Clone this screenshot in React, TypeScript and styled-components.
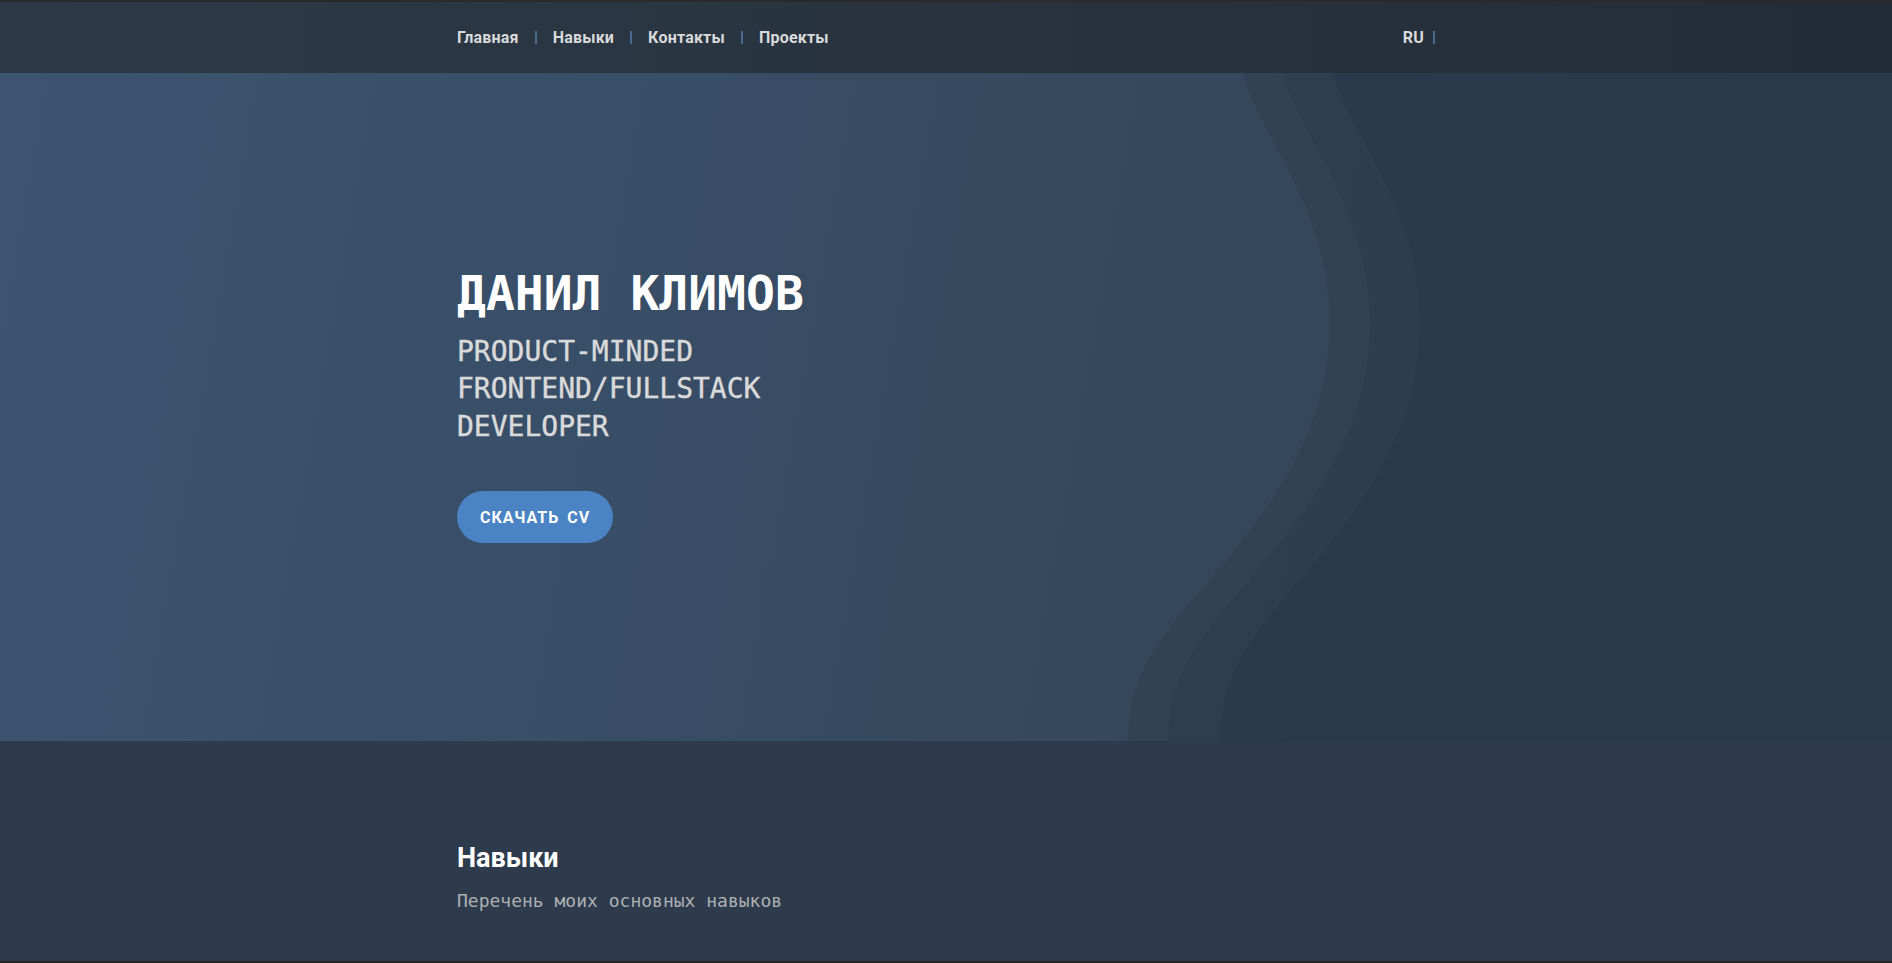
import styled, { createGlobalStyle } from 'styled-components';

const GlobalStyle = createGlobalStyle`
  html,
  body {
    margin: 0;
    padding: 0;
    background: #262626;
  }
  * {
    box-sizing: border-box;
  }
`;

const MONO = `'DejaVu Sans Mono', 'Liberation Mono', monospace`;
const SANS = `Roboto, 'Noto Sans', sans-serif`;

const Page = styled.div`
  min-height: 100vh;
  display: flex;
  flex-direction: column;
`;

const Container = styled.div`
  width: 978px;
  margin: 0 auto;
`;

const Header = styled.header`
  height: 73px;
  border-top: 2px solid #2a2a2a;
  background: linear-gradient(90deg, #2c3a47 0%, #28333f 50%, #232d38 100%);
`;

const HeaderRow = styled(Container)`
  height: 100%;
  display: flex;
  align-items: center;
  justify-content: space-between;
`;

const Nav = styled.nav`
  display: flex;
  align-items: center;
`;

const NavItem = styled.div`
  display: flex;
  align-items: center;
`;

const NavLink = styled.a`
  font-family: ${SANS};
  font-size: 16px;
  font-weight: 700;
  letter-spacing: 0.2px;
  color: #d9dadb;
  text-decoration: none;
  cursor: pointer;
`;

const Divider = styled.span`
  width: 2px;
  height: 13px;
  margin: 0 16px;
  background: #4a6a8f;
`;

const Lang = styled.div`
  display: flex;
  align-items: center;
`;

const LangDivider = styled(Divider)`
  margin: 0 0 0 9px;
`;

const Hero = styled.section`
  position: relative;
  height: 668px;
  overflow: hidden;
  background: linear-gradient(100deg, #3d5470 0%, #384d66 35%, #35475b 62%, #33455a 100%);
`;

const Waves = styled.svg`
  position: absolute;
  inset: 0;
  width: 100%;
  height: 100%;
`;

const HeroContent = styled(Container)`
  position: relative;
  padding-top: 192px;
  display: flex;
  flex-direction: column;
  align-items: flex-start;
`;

const Name = styled.h1`
  margin: 0;
  font-family: ${MONO};
  font-size: 48px;
  font-weight: 700;
  line-height: 57.6px;
  color: #ffffff;
`;

const Role = styled.p`
  margin: 10px 0 0;
  font-family: ${MONO};
  font-size: 28px;
  font-weight: 400;
  line-height: 37.5px;
  color: #dadada;
  -webkit-text-stroke: 0.4px #dadada;
`;

const DownloadButton = styled.button`
  margin-top: 46px;
  height: 52px;
  padding: 0 23px;
  border: none;
  border-radius: 26px;
  background: #4a84c4;
  font-family: ${SANS};
  font-size: 16px;
  font-weight: 700;
  letter-spacing: 1px;
  word-spacing: 3px;
  color: #ffffff;
  cursor: pointer;
`;

const Skills = styled.section`
  height: 220px;
  background: #2d3b4c;
`;

const SkillsContent = styled(Container)`
  padding-top: 101px;
`;

const SectionTitle = styled.h2`
  margin: 0;
  font-family: ${SANS};
  font-size: 27px;
  font-weight: 700;
  line-height: 33.6px;
  color: #ffffff;
`;

const SectionLead = styled.p`
  margin: 12px 0 0;
  font-family: ${MONO};
  font-size: 18px;
  line-height: 25px;
  color: #adafb1;
`;

const navItems = ['Главная', 'Навыки', 'Контакты', 'Проекты'];

function HeroWaves() {
  return (
    <Waves viewBox="0 0 1892 668" preserveAspectRatio="none" aria-hidden>
      <path
        d="M1243,0 C1256,55 1330,135 1330,250 C1330,360 1268,440 1200,518 C1150,575 1128,612 1128,668 L1892,668 L1892,0 Z"
        fill="rgba(18,26,36,0.1)"
      />
      <path
        d="M1283,0 C1296,55 1370,135 1370,250 C1370,360 1308,440 1240,518 C1190,575 1168,612 1168,668 L1892,668 L1892,0 Z"
        fill="rgba(18,26,36,0.1)"
      />
      <path
        d="M1333,0 C1346,55 1420,135 1420,250 C1420,360 1358,440 1290,518 C1242,575 1220,612 1220,668 L1892,668 L1892,0 Z"
        fill="rgba(18,26,36,0.1)"
      />
    </Waves>
  );
}

export default function App() {
  return (
    <Page>
      <GlobalStyle />
      <Header>
        <HeaderRow>
          <Nav>
            {navItems.map((item, i) => (
              <NavItem key={item}>
                {i > 0 && <Divider />}
                <NavLink>{item}</NavLink>
              </NavItem>
            ))}
          </Nav>
          <Lang>
            <NavLink>RU</NavLink>
            <LangDivider />
          </Lang>
        </HeaderRow>
      </Header>
      <Hero>
        <HeroWaves />
        <HeroContent>
          <Name>ДАНИЛ КЛИМОВ</Name>
          <Role>
            PRODUCT-MINDED
            <br />
            FRONTEND/FULLSTACK
            <br />
            DEVELOPER
          </Role>
          <DownloadButton>СКАЧАТЬ CV</DownloadButton>
        </HeroContent>
      </Hero>
      <Skills>
        <SkillsContent>
          <SectionTitle>Навыки</SectionTitle>
          <SectionLead>Перечень моих основных навыков</SectionLead>
        </SkillsContent>
      </Skills>
    </Page>
  );
}
